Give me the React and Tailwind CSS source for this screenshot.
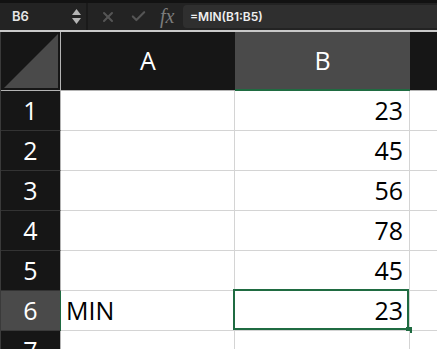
import { X, Check } from "lucide-react";

const rows = [
  { n: 1, a: "", b: "23" },
  { n: 2, a: "", b: "45" },
  { n: 3, a: "", b: "56" },
  { n: 4, a: "", b: "78" },
  { n: 5, a: "", b: "45" },
  { n: 6, a: "MIN", b: "23", selected: true },
  { n: 7, a: "", b: "" },
];

export default function App() {
  return (
    <div className="w-[437px] h-[349px] overflow-hidden bg-[#161616] font-['Open_Sans',sans-serif]">
      {/* Formula bar */}
      <div className="h-[30px] flex border-t-[3px] border-[#121212] bg-[#232323]">
        <div className="w-[86px] flex items-center pl-3 pr-[5px] font-['Inter',sans-serif]">
          <span className="text-[13px] font-semibold text-[#e6e6e6]">B6</span>
          <div className="ml-auto flex flex-col items-center gap-[3px]">
            <svg width="9" height="6" viewBox="0 0 9 6">
              <path d="M4.5 0 L9 6 L0 6 Z" fill="#b5b5b5" />
            </svg>
            <svg width="9" height="6" viewBox="0 0 9 6">
              <path d="M0 0 L9 0 L4.5 6 Z" fill="#b5b5b5" />
            </svg>
          </div>
        </div>
        <div className="w-[2px] bg-[#1a1a1a]" />
        <div className="w-[95px] flex items-center">
          <X className="ml-[12px] w-[16px] h-[16px] text-[#555555]" strokeWidth={3} />
          <Check className="ml-[14px] w-[17px] h-[17px] text-[#555555]" strokeWidth={3} />
          <span className="ml-[13px] text-[20px] italic text-[#7c7c7c] font-['Liberation_Serif',serif] leading-none -mt-[2px]">
            fx
          </span>
        </div>
        <div className="flex-1 mt-[2px] mb-[2px] bg-[#2f2f2f] rounded-l-[4px] flex items-center pl-[7px]">
          <span className="text-[12px] font-semibold text-[#f0f0f0] font-['Inter',sans-serif]">
            =MIN(B1:B5)
          </span>
        </div>
      </div>
      <div className="h-[2px] bg-[#c9c9c9]" />

      {/* Grid */}
      <div className="flex flex-col border-l border-[#3a3a3a]">
        {/* Header row */}
        <div className="flex h-[59px] border-b border-[#b4b4b4]">
          <div className="w-[60px] border-r border-[#b4b4b4] relative">
            <svg className="absolute left-[3px] bottom-[2px]" width="54" height="54" viewBox="0 0 54 54">
              <path d="M0 54 L54 54 L54 0 Z" fill="#4a4a4a" />
            </svg>
          </div>
          <div className="w-[174px] flex items-center justify-center text-white text-[25px]">
            A
          </div>
          <div className="w-[175px] flex items-center justify-center text-white text-[25px] bg-[#4a4a4a] border-b-2 border-[#1f6b41] -mb-px">
            B
          </div>
          <div className="flex-1" />
        </div>

        {rows.map((r) => (
          <div key={r.n} className="flex h-[40px]">
            <div
              className={`w-[60px] flex items-center justify-center text-white text-[25px] border-b border-r ${
                r.selected
                  ? "bg-[#4a4a4a] border-b-[#3a3a3a] border-r-[#1f6b41]"
                  : "bg-[#161616] border-b-[#333333] border-r-[#b4b4b4]"
              }`}
            >
              {r.n}
            </div>
            <div className="w-[174px] bg-white border-b border-r border-[#d4d4d4] flex items-center pl-[5px] text-[25px] text-black">
              {r.a}
            </div>
            <div className="w-[175px] relative bg-white border-b border-r border-[#d4d4d4] flex items-center justify-end pr-[6px] text-[25px] text-black">
              {r.b}
              {r.selected && (
                <>
                  <div className="absolute -left-[2px] -top-[2px] right-0 bottom-0 border-2 border-[#1f6b41]" />
                  <div className="absolute -right-[3px] -bottom-[3px] w-[6px] h-[6px] bg-[#1f6b41]" />
                </>
              )}
            </div>
            <div className="flex-1 bg-white border-b border-[#d4d4d4]" />
          </div>
        ))}
      </div>
    </div>
  );
}
